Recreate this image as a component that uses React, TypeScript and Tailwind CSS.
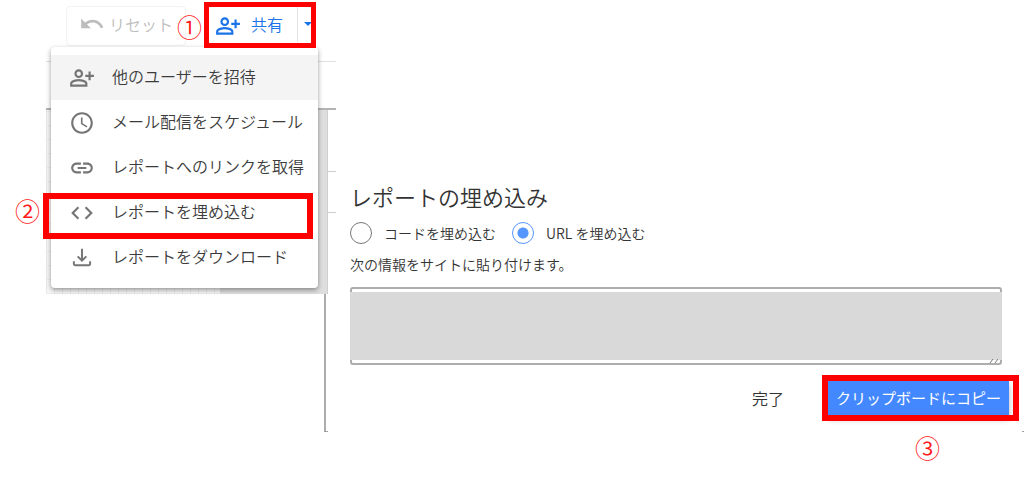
import type { ReactNode } from 'react'
import { MdAccessTime, MdCode, MdLink, MdOutlinePersonAddAlt, MdUndo } from 'react-icons/md'

function DownloadIcon() {
  return (
    <svg width="26" height="26" viewBox="0 0 24 24" fill="none" stroke="currentColor" strokeWidth="1.8" aria-hidden>
      <path d="M12 3.5v11M8 10.5l4 4 4-4M4.5 15v2.5a1.2 1.2 0 0 0 1.2 1.2h12.6a1.2 1.2 0 0 0 1.2-1.2V15" />
    </svg>
  )
}

const MENU_ITEMS: ReadonlyArray<{ label: string; icon: ReactNode; active?: boolean; step?: string }> = [
  { label: '他のユーザーを招待', icon: <MdOutlinePersonAddAlt size={26} />, active: true },
  { label: 'メール配信をスケジュール', icon: <MdAccessTime size={26} /> },
  { label: 'レポートへのリンクを取得', icon: <MdLink size={26} /> },
  { label: 'レポートを埋め込む', icon: <MdCode size={26} />, step: '②' },
  { label: 'レポートをダウンロード', icon: <DownloadIcon /> }
]

function Step({ children, className }: { children: ReactNode; className: string }) {
  return (
    <span className={`absolute z-20 text-[25px] leading-6 text-[#ff1a1a] pointer-events-none ${className}`}>
      {children}
    </span>
  )
}

function Frame({ className }: { className: string }) {
  return <span className={`absolute z-10 border-[#ff0000] pointer-events-none ${className}`} aria-hidden />
}

function Toolbar() {
  return (
    <div className="flex h-[61px] items-start pl-5 pt-1.5">
      <button
        type="button"
        disabled
        className="flex h-10 w-[120px] items-center gap-1 rounded border border-[#f3f3f3] pl-3 pb-1 text-base text-[#bdbdbd] whitespace-nowrap"
      >
        <MdUndo size={26} className="shrink-0" />
        リセット
      </button>
      <div className="relative ml-[19px] flex h-9 w-[110px] items-stretch text-[#1a73e8]">
        <Step className="-left-7 top-2">①</Step>
        <Frame className="-left-px -right-px -top-1 -bottom-1.5 border-[5px]" />
        <button type="button" className="flex grow items-center gap-2.5 pl-2.5 pt-1 text-base whitespace-nowrap">
          <MdOutlinePersonAddAlt size={26} />
          <span className="pb-1">共有</span>
        </button>
        <button
          type="button"
          aria-label="共有オプション"
          className="flex w-[18px] items-center border-l border-[#e4e4e4] pl-1.5"
        >
          <svg width="8" height="4" fill="currentColor" className="shrink-0" aria-hidden>
            <path d="M0 0h8L4 4z" />
          </svg>
        </button>
      </div>
    </div>
  )
}

function ShareMenu() {
  return (
    <ul className="absolute left-[51px] top-[47px] w-[267px] rounded bg-white py-2 shadow-[0_2px_5px_rgba(0,0,0,0.4)]">
      {MENU_ITEMS.map(({ label, icon, active, step }) => (
        <li key={label} className="relative">
          {step && (
            <>
              <Step className="-left-9 top-2">{step}</Step>
              <Frame className="-left-2 right-[5px] top-[3px] -bottom-1 border-[6px]" />
            </>
          )}
          <button
            type="button"
            className={`flex h-[45px] w-full items-center gap-[17px] pl-[18px] text-base text-[#3c3c3c] whitespace-nowrap ${
              active ? 'bg-[#f4f4f4]' : ''
            }`}
          >
            <span className="text-[#757575]">{icon}</span>
            <span className="pb-1">{label}</span>
          </button>
        </li>
      ))}
    </ul>
  )
}

function Editor() {
  return (
    <section className="relative z-10 w-[336px] shrink-0 pl-[46px]">
      <div className="bg-white">
        <Toolbar />
        <div className="h-[49px] border-t border-b-2 border-t-[#e0e0e0] border-b-[#b4b4b4]" />
      </div>
      <div className="flex h-[184px]">
        {/* report canvas with its grid, then the grey gutter */}
        <div className="w-[174px] bg-[#f7f7f7] bg-[repeating-linear-gradient(90deg,#e8e8e8_0_1px,transparent_1px_8px),repeating-linear-gradient(0deg,#ececec_0_1px,transparent_1px_14px)]" />
        <div className="w-[108px] border-r border-[#cfcfcf] bg-[#dedede]" />
        <div className="grow bg-white pt-[61px]">
          <div className="h-[42px] border-y border-[#cfcfcf]" />
        </div>
      </div>
      <ShareMenu />
    </section>
  )
}

function EmbedDialog() {
  return (
    <section className="-ml-3 mt-[179px] min-w-0 grow">
      <form className="border-l-2 border-[#adadad] pl-6 text-[#333333]">
        <h2 className="text-[22px] leading-[34px]">レポートの埋め込み</h2>
        <div className="flex h-10 items-center gap-4 text-sm">
          <label className="flex items-center gap-3">
            <input
              type="radio"
              name="embed"
              className="size-[22px] appearance-none rounded-full border border-[#777777] checked:border-[#5596ff] checked:bg-[radial-gradient(circle,#5596ff_0_5px,transparent_6px)]"
            />
            コードを埋め込む
          </label>
          <label className="flex items-center gap-3">
            <input
              type="radio"
              name="embed"
              defaultChecked
              className="size-[22px] appearance-none rounded-full border border-[#777777] checked:border-[#5596ff] checked:bg-[radial-gradient(circle,#5596ff_0_5px,transparent_6px)]"
            />
            URL を埋め込む
          </label>
        </div>
        <label htmlFor="embed-url" className="block text-sm leading-[22px]">
          次の情報をサイトに貼り付けます。
        </label>
        <div className="relative mt-3 mr-[22px]">
          <textarea
            id="embed-url"
            readOnly
            className="block h-[78px] w-full resize-none rounded-[3px] border-2 border-[#adadad] bg-white"
          />
          <div className="absolute inset-x-0 top-[5px] bottom-[5px] bg-[#d9d9d9]" />
          <svg className="absolute right-1 bottom-0.5" width="9" height="4" stroke="#777777" aria-hidden>
            <path d="M1 4l3-4M6 4l3-4" />
          </svg>
        </div>
        <div className="flex items-center justify-end gap-11 pt-4 pb-4 pr-[15px]">
          <button type="button" className="text-base">
            完了
          </button>
          <div className="relative">
            <button
              type="button"
              className="block h-[34px] w-[181px] bg-[#4488ff] text-[15px] font-normal text-white whitespace-nowrap shadow-[0_4px_6px_rgba(0,0,0,0.3)]"
            >
              クリップボードにコピー
            </button>
            <Frame className="-left-1.5 -right-[10px] -top-1.5 -bottom-1.5 border-[6px]" />
            <Step className="left-[87px] top-[54px]">③</Step>
          </div>
        </div>
      </form>
      <div className="flex h-px justify-between">
        <span className="w-1 bg-[#a0a0a0]" />
        <span className="w-0.5 bg-[#a0a0a0]" />
      </div>
    </section>
  )
}

export default function App() {
  return (
    <main className="flex min-h-screen items-start overflow-hidden bg-white font-['Noto_Sans_CJK_JP',sans-serif] font-[350]">
      <Editor />
      <EmbedDialog />
    </main>
  )
}
